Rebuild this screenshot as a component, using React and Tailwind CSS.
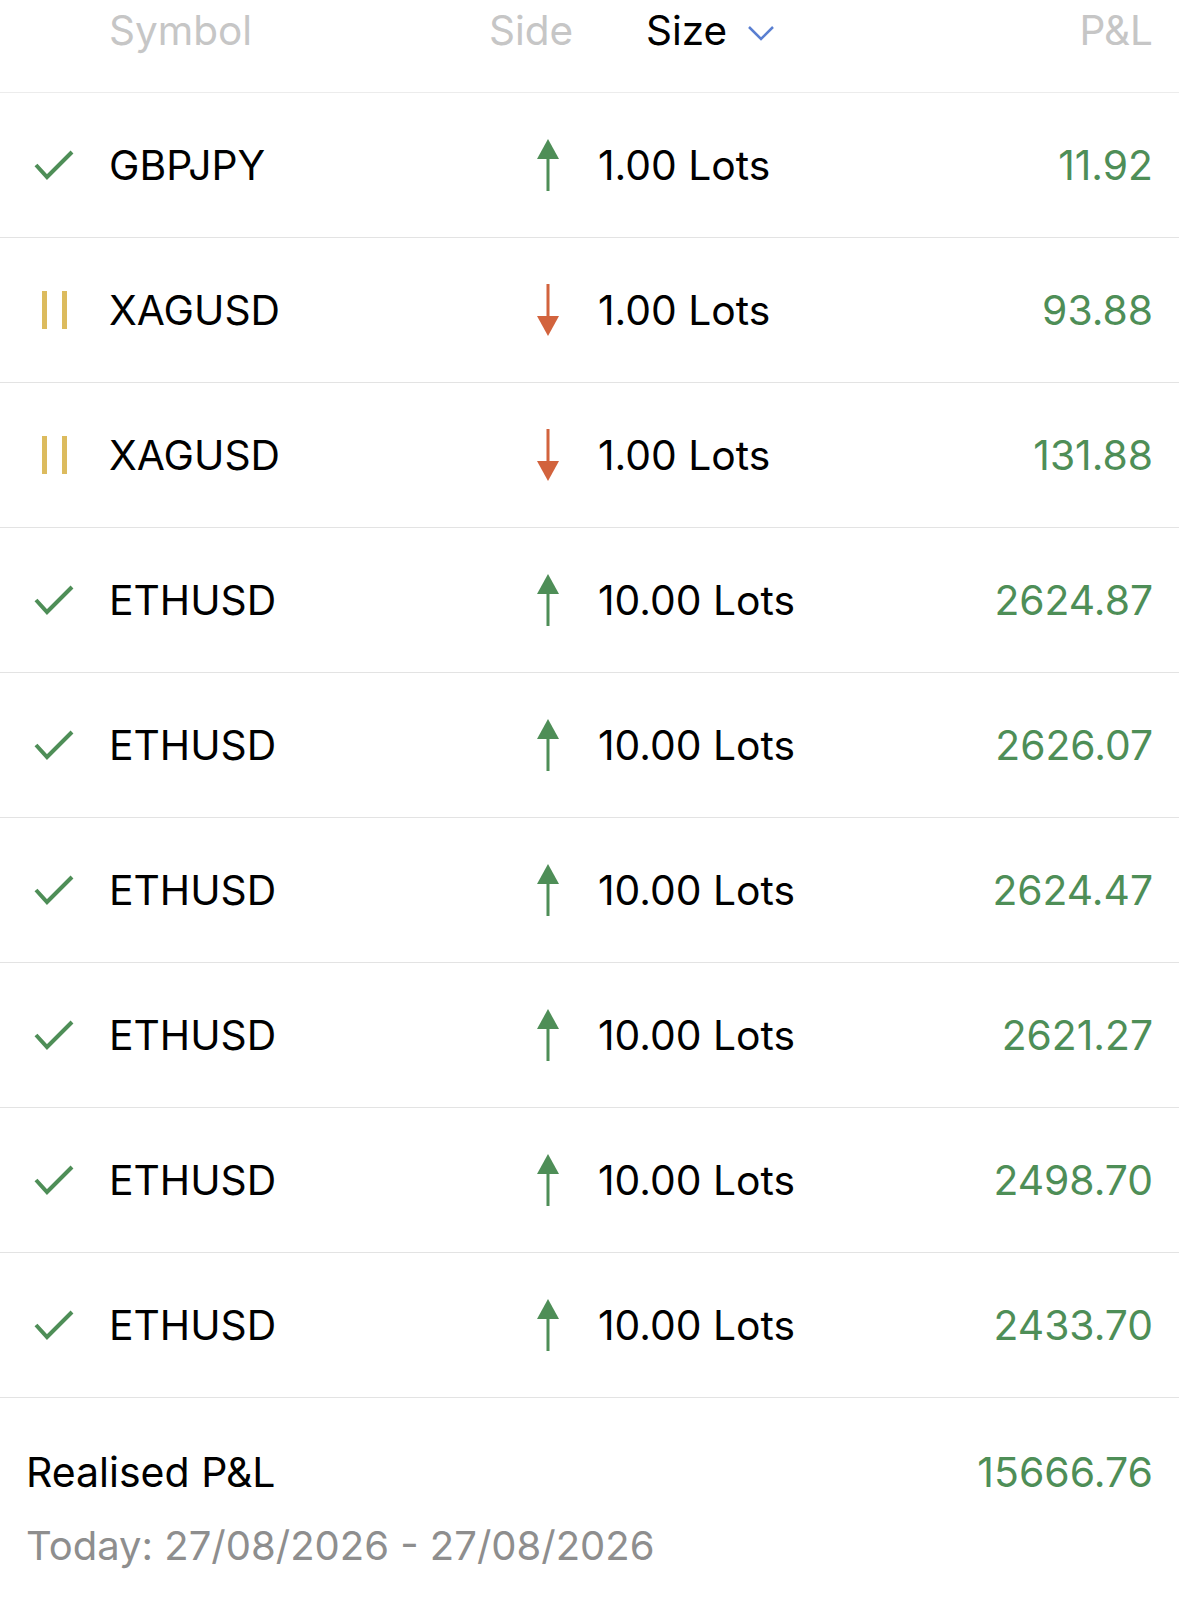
const GREEN = "text-[#4e8e57]";

const trades = [
  { symbol: "GBPJPY", status: "done", side: "buy", size: "1.00 Lots", pnl: "11.92" },
  { symbol: "XAGUSD", status: "pending", side: "sell", size: "1.00 Lots", pnl: "93.88" },
  { symbol: "XAGUSD", status: "pending", side: "sell", size: "1.00 Lots", pnl: "131.88" },
  { symbol: "ETHUSD", status: "done", side: "buy", size: "10.00 Lots", pnl: "2624.87" },
  { symbol: "ETHUSD", status: "done", side: "buy", size: "10.00 Lots", pnl: "2626.07" },
  { symbol: "ETHUSD", status: "done", side: "buy", size: "10.00 Lots", pnl: "2624.47" },
  { symbol: "ETHUSD", status: "done", side: "buy", size: "10.00 Lots", pnl: "2621.27" },
  { symbol: "ETHUSD", status: "done", side: "buy", size: "10.00 Lots", pnl: "2498.70" },
  { symbol: "ETHUSD", status: "done", side: "buy", size: "10.00 Lots", pnl: "2433.70" },
];

const CheckIcon = () => (
  <svg width="40" height="32" viewBox="0 0 40 32" fill="none">
    <path d="M2 16 L13 28 L38 3" stroke="#4e8e57" strokeWidth="4" strokeLinecap="butt" strokeLinejoin="miter" />
  </svg>
);

const PauseIcon = () => (
  <div className="flex h-[40px] w-[40px] items-center justify-center gap-[15px]">
    <div className="h-[38px] w-[5px] bg-[#dcbb5e]" />
    <div className="h-[38px] w-[5px] bg-[#dcbb5e]" />
  </div>
);

const ArrowUp = () => (
  <svg width="22" height="52" viewBox="0 0 22 52">
    <path d="M11 0 L22 20 L0 20 Z" fill="#4e8e57" />
    <rect x="9.5" y="18" width="3" height="34" fill="#4e8e57" />
  </svg>
);

const ArrowDown = () => (
  <svg width="22" height="52" viewBox="0 0 22 52">
    <rect x="9.5" y="0" width="3" height="34" fill="#d2633d" />
    <path d="M11 52 L22 32 L0 32 Z" fill="#d2633d" />
  </svg>
);

const App = () => {
  return (
    <div className="min-h-[1614px] w-full bg-white font-['Inter','Liberation_Sans',sans-serif] text-black">
      {/* Column header */}
      <div className="h-[93px] border-b border-[#ececec]">
        <div className="flex h-[62px] items-center pr-[26px] text-[40.5px] leading-none">
          <div className="w-[489px] pl-[109px] text-[#c6c6c6]">Symbol</div>
          <div className="w-[157px] text-[#c6c6c6]">Side</div>
          <div className="flex items-center">
            <span>Size</span>
            <svg className="ml-[20px] mt-[4px]" width="28" height="16" viewBox="0 0 28 16" fill="none">
              <path d="M2 2 L14 14 L26 2" stroke="#5a7fd1" strokeWidth="2.5" />
            </svg>
          </div>
          <div className="flex-1 text-right text-[#c6c6c6]">P&amp;L</div>
        </div>
      </div>

      {/* Trade rows */}
      {trades.map((trade, index) => (
        <div key={index} className="flex h-[145px] items-center border-b border-[#e3e3e3] pr-[26px] text-[40.8px] leading-none">
          <div className="flex w-[109px] items-center pl-[34px]">
            {trade.status === "done" ? <CheckIcon /> : <PauseIcon />}
          </div>
          <div className="w-[428px]">{trade.symbol}</div>
          <div className="flex w-[61px] items-center">
            {trade.side === "buy" ? <ArrowUp /> : <ArrowDown />}
          </div>
          <div>{trade.size}</div>
          <div className={`flex-1 text-right ${GREEN}`}>{trade.pnl}</div>
        </div>
      ))}

      {/* Summary */}
      <div className="px-[26px] pt-[54px]">
        <div className="flex items-center justify-between text-[41px] leading-none">
          <span>Realised P&amp;L</span>
          <span className={GREEN}>15666.76</span>
        </div>
        <div className="mt-[33px] text-[40px] leading-none text-[#8e8e8e]">
          Today: 27/08/2026 - 27/08/2026
        </div>
      </div>
    </div>
  );
};

export default App;
